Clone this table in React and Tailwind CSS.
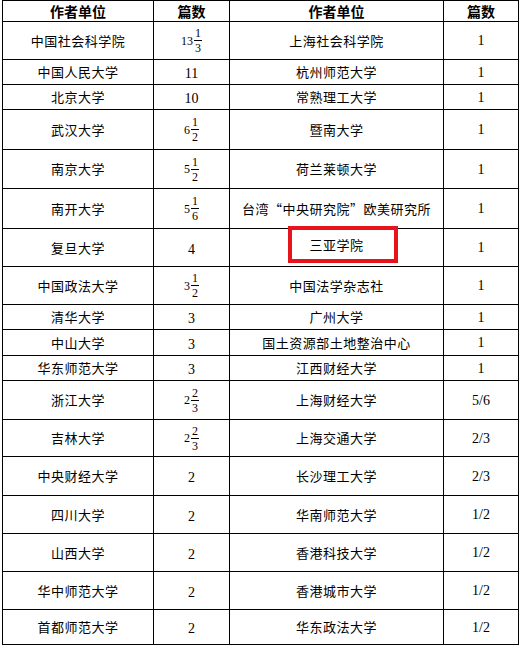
const rows = [
  { a: "中国社会科学院", n: [13, 1, 3], b: "上海社会科学院", v: "1", h: "h-[38px]" },
  { a: "中国人民大学", n: [11], b: "杭州师范大学", v: "1", h: "h-[25px]" },
  { a: "北京大学", n: [10], b: "常熟理工大学", v: "1", h: "h-[25px]" },
  { a: "武汉大学", n: [6, 1, 2], b: "暨南大学", v: "1", h: "h-[40px]" },
  { a: "南京大学", n: [5, 1, 2], b: "荷兰莱顿大学", v: "1", h: "h-[39px]" },
  { a: "南开大学", n: [5, 1, 6], b: "台湾“中央研究院”欧美研究所", v: "1", h: "h-[40px]" },
  { a: "复旦大学", n: [4], b: "三亚学院", v: "1", h: "h-[37px]", mark: true },
  { a: "中国政法大学", n: [3, 1, 2], b: "中国法学杂志社", v: "1", h: "h-[38px]" },
  { a: "清华大学", n: [3], b: "广州大学", v: "1", h: "h-[23px]" },
  { a: "中山大学", n: [3], b: "国土资源部土地整治中心", v: "1", h: "h-[26px]" },
  { a: "华东师范大学", n: [3], b: "江西财经大学", v: "1", h: "h-[25px]" },
  { a: "浙江大学", n: [2, 2, 3], b: "上海财经大学", v: "5/6", h: "h-[39px]" },
  { a: "吉林大学", n: [2, 2, 3], b: "上海交通大学", v: "2/3", h: "h-[37px]" },
  { a: "中央财经大学", n: [2], b: "长沙理工大学", v: "2/3", h: "h-[39px]" },
  { a: "四川大学", n: [2], b: "华南师范大学", v: "1/2", h: "h-[38px]" },
  { a: "山西大学", n: [2], b: "香港科技大学", v: "1/2", h: "h-[38px]" },
  { a: "华中师范大学", n: [2], b: "香港城市大学", v: "1/2", h: "h-[38px]" },
  { a: "首都师范大学", n: [2], b: "华东政法大学", v: "1/2", h: "h-[35px]" },
];

const cjk = "font-['Noto_Sans_CJK_SC',sans-serif]";
const serif = "font-['Liberation_Serif',serif]";

function Count({ n }) {
  if (n.length === 1) {
    return <span className={`${serif} text-[14px]`}>{n[0]}</span>;
  }
  return (
    <span className={`${serif} inline-flex items-center text-[12px] leading-none`}>
      <span>{n[0]}</span>
      <span className="inline-flex flex-col items-center ml-[1px] text-[12px] leading-none">
        <span className="px-[1px]">{n[1]}</span>
        <span className="w-full border-t border-black my-[1px]"></span>
        <span className="px-[1px]">{n[2]}</span>
      </span>
    </span>
  );
}

export default function App() {
  return (
    <div className="bg-white w-[519px] h-[645px]">
      <table className="ml-[2px] border-collapse table-fixed w-[516px] text-black">
        <colgroup>
          <col className="w-[151px]" />
          <col className="w-[76px]" />
          <col className="w-[214px]" />
          <col className="w-[75px]" />
        </colgroup>
        <thead>
          <tr className="h-[21px]">
            {["作者单位", "篇数", "作者单位", "篇数"].map((t, i) => (
              <th
                key={i}
                className={`${cjk} border border-black p-0 text-[14px] font-bold leading-none text-center`}
              >
                {t}
              </th>
            ))}
          </tr>
        </thead>
        <tbody>
          {rows.map((r, i) => (
            <tr key={i} className={r.h}>
              <td className={`${cjk} border border-black p-0 text-center text-[13px] tracking-[0.5px]`}>
                {r.a}
              </td>
              <td className="border border-black p-0 text-center">
                <Count n={r.n} />
              </td>
              <td className={`${cjk} border border-black p-0 text-center text-[13px] tracking-[0.5px]`}>
                {r.mark ? (
                  <span className="inline-flex items-center justify-center w-[110px] h-[37px] ml-[12px] pr-[12px] border-4 border-[#e8141b] -translate-y-[3px] align-middle">
                    {r.b}
                  </span>
                ) : (
                  r.b
                )}
              </td>
              <td className={`${serif} border border-black p-0 text-center text-[14px]`}>
                {r.v}
              </td>
            </tr>
          ))}
        </tbody>
      </table>
    </div>
  );
}
